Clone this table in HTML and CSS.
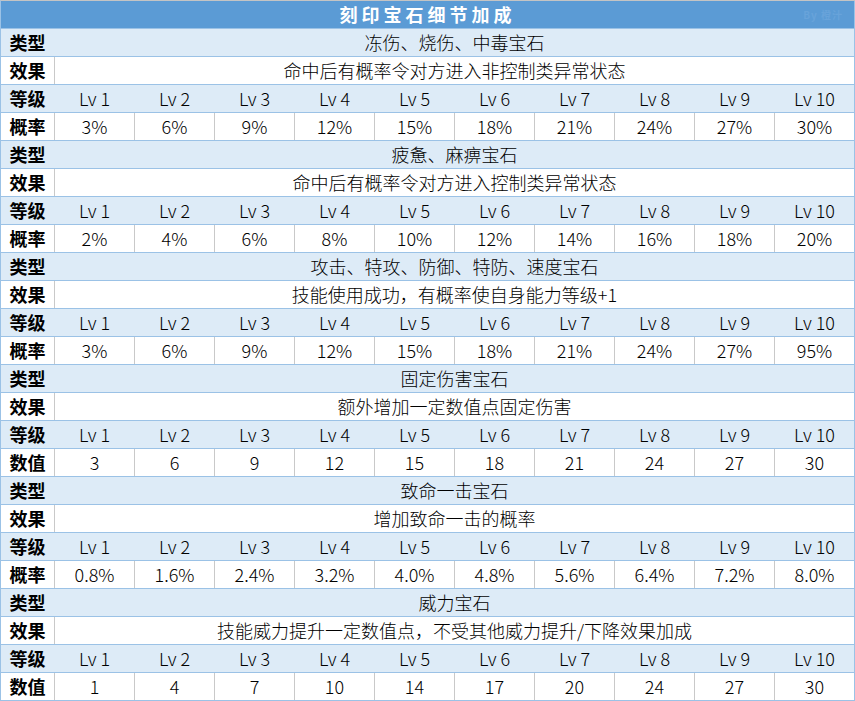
FILE: index.html
```html
<!DOCTYPE html>
<html lang="zh-CN">
<head>
<meta charset="utf-8">
<title>刻印宝石细节加成</title>
<link rel="stylesheet" href="styles.css">
</head>
<body>
<div class="sheet">
  <div class="title">刻印宝石细节加成<span class="mark">By 橙汁</span></div>

  <div class="row blue"><div class="lab">类型</div><div class="wide">冻伤、烧伤、中毒宝石</div></div>
  <div class="row white"><div class="lab">效果</div><div class="wide">命中后有概率令对方进入非控制类异常状态</div></div>
  <div class="row blue"><div class="lab">等级</div><div class="c">Lv 1</div><div class="c">Lv 2</div><div class="c">Lv 3</div><div class="c">Lv 4</div><div class="c">Lv 5</div><div class="c">Lv 6</div><div class="c">Lv 7</div><div class="c">Lv 8</div><div class="c">Lv 9</div><div class="c">Lv 10</div></div>
  <div class="row white"><div class="lab">概率</div><div class="c">3%</div><div class="c">6%</div><div class="c">9%</div><div class="c">12%</div><div class="c">15%</div><div class="c">18%</div><div class="c">21%</div><div class="c">24%</div><div class="c">27%</div><div class="c">30%</div></div>

  <div class="row blue"><div class="lab">类型</div><div class="wide">疲惫、麻痹宝石</div></div>
  <div class="row white"><div class="lab">效果</div><div class="wide">命中后有概率令对方进入控制类异常状态</div></div>
  <div class="row blue"><div class="lab">等级</div><div class="c">Lv 1</div><div class="c">Lv 2</div><div class="c">Lv 3</div><div class="c">Lv 4</div><div class="c">Lv 5</div><div class="c">Lv 6</div><div class="c">Lv 7</div><div class="c">Lv 8</div><div class="c">Lv 9</div><div class="c">Lv 10</div></div>
  <div class="row white"><div class="lab">概率</div><div class="c">2%</div><div class="c">4%</div><div class="c">6%</div><div class="c">8%</div><div class="c">10%</div><div class="c">12%</div><div class="c">14%</div><div class="c">16%</div><div class="c">18%</div><div class="c">20%</div></div>

  <div class="row blue"><div class="lab">类型</div><div class="wide">攻击、特攻、防御、特防、速度宝石</div></div>
  <div class="row white"><div class="lab">效果</div><div class="wide">技能使用成功，有概率使自身能力等级+1</div></div>
  <div class="row blue"><div class="lab">等级</div><div class="c">Lv 1</div><div class="c">Lv 2</div><div class="c">Lv 3</div><div class="c">Lv 4</div><div class="c">Lv 5</div><div class="c">Lv 6</div><div class="c">Lv 7</div><div class="c">Lv 8</div><div class="c">Lv 9</div><div class="c">Lv 10</div></div>
  <div class="row white"><div class="lab">概率</div><div class="c">3%</div><div class="c">6%</div><div class="c">9%</div><div class="c">12%</div><div class="c">15%</div><div class="c">18%</div><div class="c">21%</div><div class="c">24%</div><div class="c">27%</div><div class="c">95%</div></div>

  <div class="row blue"><div class="lab">类型</div><div class="wide">固定伤害宝石</div></div>
  <div class="row white"><div class="lab">效果</div><div class="wide">额外增加一定数值点固定伤害</div></div>
  <div class="row blue"><div class="lab">等级</div><div class="c">Lv 1</div><div class="c">Lv 2</div><div class="c">Lv 3</div><div class="c">Lv 4</div><div class="c">Lv 5</div><div class="c">Lv 6</div><div class="c">Lv 7</div><div class="c">Lv 8</div><div class="c">Lv 9</div><div class="c">Lv 10</div></div>
  <div class="row white"><div class="lab">数值</div><div class="c">3</div><div class="c">6</div><div class="c">9</div><div class="c">12</div><div class="c">15</div><div class="c">18</div><div class="c">21</div><div class="c">24</div><div class="c">27</div><div class="c">30</div></div>

  <div class="row blue"><div class="lab">类型</div><div class="wide">致命一击宝石</div></div>
  <div class="row white"><div class="lab">效果</div><div class="wide">增加致命一击的概率</div></div>
  <div class="row blue"><div class="lab">等级</div><div class="c">Lv 1</div><div class="c">Lv 2</div><div class="c">Lv 3</div><div class="c">Lv 4</div><div class="c">Lv 5</div><div class="c">Lv 6</div><div class="c">Lv 7</div><div class="c">Lv 8</div><div class="c">Lv 9</div><div class="c">Lv 10</div></div>
  <div class="row white"><div class="lab">概率</div><div class="c">0.8%</div><div class="c">1.6%</div><div class="c">2.4%</div><div class="c">3.2%</div><div class="c">4.0%</div><div class="c">4.8%</div><div class="c">5.6%</div><div class="c">6.4%</div><div class="c">7.2%</div><div class="c">8.0%</div></div>

  <div class="row blue"><div class="lab">类型</div><div class="wide">威力宝石</div></div>
  <div class="row white"><div class="lab">效果</div><div class="wide">技能威力提升一定数值点，不受其他威力提升/下降效果加成</div></div>
  <div class="row blue"><div class="lab">等级</div><div class="c">Lv 1</div><div class="c">Lv 2</div><div class="c">Lv 3</div><div class="c">Lv 4</div><div class="c">Lv 5</div><div class="c">Lv 6</div><div class="c">Lv 7</div><div class="c">Lv 8</div><div class="c">Lv 9</div><div class="c">Lv 10</div></div>
  <div class="row white"><div class="lab">数值</div><div class="c">1</div><div class="c">4</div><div class="c">7</div><div class="c">10</div><div class="c">14</div><div class="c">17</div><div class="c">20</div><div class="c">24</div><div class="c">27</div><div class="c">30</div></div>
</div>
</body>
</html>
```
FILE: styles.css
```css
html, body {
  margin: 0;
  padding: 0;
  background: #ffffff;
}
.sheet {
  width: 855px;
  box-sizing: border-box;
  border-top: 1px solid #c4c4c4;
  border-left: 1px solid #9bc2e6;
  font-family: "Noto Sans CJK SC", "Noto Sans", sans-serif;
  font-size: 18px;
  font-weight: 300;
  color: #000;
}
.title {
  position: relative;
  height: 27px;
  line-height: 27px;
  background: #5b9bd5;
  color: #fff;
  font-weight: bold;
  text-align: center;
  letter-spacing: 4px;
  border-bottom: 1px solid #9bc2e6;
  border-right: 1px solid #9bc2e6;
}
.mark {
  position: absolute;
  right: 11px;
  top: 0;
  font-size: 10px;
  letter-spacing: 1px;
  color: #68a3da;
  font-weight: bold;
}
.row {
  display: grid;
  grid-template-columns: 54px repeat(10, 80px);
  height: 28px;
  border-bottom: 1px solid #9bc2e6;
  box-sizing: border-box;
}
.row > div {
  box-sizing: border-box;
  height: 27px;
  line-height: 27px;
  text-align: center;
  white-space: nowrap;
  border-right: 1px solid #c9c9c9;
}
.row > div:last-child {
  border-right-color: #9bc2e6;
}
.blue {
  background: #ddebf7;
}
.blue > div {
  border-right-color: #ddebf7;
}
.white {
  background: #ffffff;
}
.lab {
  font-weight: bold;
}
.wide {
  grid-column: span 10;
}
```
